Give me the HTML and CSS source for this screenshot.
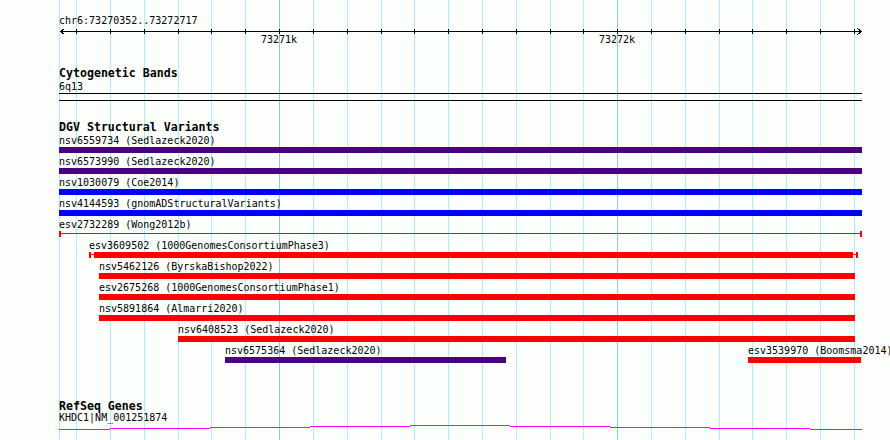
FILE: index.html
```html
<!DOCTYPE html>
<html lang="en">
<head>
    <meta charset="UTF-8">
    <title>Genome Browser - chr6:73270352..73272717</title>
    <link rel="stylesheet" href="styles.css">
</head>
<body>
    <div id="browser">
        <!-- vertical grid, one line per 100bp, darker at each kb -->
        <svg id="grid" width="890" height="440">
            <g class="minor">
                <line x1="59.5" y1="0" x2="59.5" y2="440"/>
                <line x1="76.5" y1="0" x2="76.5" y2="440"/>
                <line x1="110.5" y1="0" x2="110.5" y2="440"/>
                <line x1="144.5" y1="0" x2="144.5" y2="440"/>
                <line x1="178.5" y1="0" x2="178.5" y2="440"/>
                <line x1="211.5" y1="0" x2="211.5" y2="440"/>
                <line x1="245.5" y1="0" x2="245.5" y2="440"/>
                <line x1="313.5" y1="0" x2="313.5" y2="440"/>
                <line x1="347.5" y1="0" x2="347.5" y2="440"/>
                <line x1="381.5" y1="0" x2="381.5" y2="440"/>
                <line x1="414.5" y1="0" x2="414.5" y2="440"/>
                <line x1="448.5" y1="0" x2="448.5" y2="440"/>
                <line x1="482.5" y1="0" x2="482.5" y2="440"/>
                <line x1="516.5" y1="0" x2="516.5" y2="440"/>
                <line x1="550.5" y1="0" x2="550.5" y2="440"/>
                <line x1="583.5" y1="0" x2="583.5" y2="440"/>
                <line x1="651.5" y1="0" x2="651.5" y2="440"/>
                <line x1="685.5" y1="0" x2="685.5" y2="440"/>
                <line x1="719.5" y1="0" x2="719.5" y2="440"/>
                <line x1="752.5" y1="0" x2="752.5" y2="440"/>
                <line x1="786.5" y1="0" x2="786.5" y2="440"/>
                <line x1="820.5" y1="0" x2="820.5" y2="440"/>
                <line x1="854.5" y1="0" x2="854.5" y2="440"/>
            </g>
            <g class="major">
                <line x1="279.5" y1="0" x2="279.5" y2="440"/>
                <line x1="617.5" y1="0" x2="617.5" y2="440"/>
            </g>
        </svg>

        <div id="view">
            <div class="ruler">
                <div class="ruler-label">chr6:73270352..73272717</div>
                <svg class="axis" width="803" height="6">
                    <path d="M1 4.5 H803"/>
                    <path d="M5.5 1.5 L1.5 4.5 L5.5 7.5"/>
                    <path d="M798.5 1.5 L802.5 4.5 L798.5 7.5"/>
                    <path d="M17.5 2 V7 M51.5 2 V7 M85.5 2 V7 M119.5 2 V7 M152.5 2 V7 M186.5 2 V7 M220.5 2 V7 M254.5 2 V7 M288.5 2 V7 M322.5 2 V7 M355.5 2 V7 M389.5 2 V7 M423.5 2 V7 M457.5 2 V7 M491.5 2 V7 M524.5 2 V7 M558.5 2 V7 M592.5 2 V7 M626.5 2 V7 M660.5 2 V7 M693.5 2 V7 M727.5 2 V7 M761.5 2 V7 M795.5 2 V7"/>
                </svg>
                <div class="tick-labels">
                    <span style="left: 202px">73271k</span>
                    <span style="left: 540px">73272k</span>
                </div>
            </div>

            <div class="track cyto-track">
                <div class="track-title">Cytogenetic Bands</div>
                <div class="band-label">6q13</div>
                <div class="band"></div>
            </div>

            <div class="track dgv-track">
                <div class="track-title">DGV Structural Variants</div>

                <div class="row">
                    <div class="feature" style="left: 0; width: 803px">
                        <div class="label">nsv6559734 (Sedlazeck2020)</div>
                        <div class="bar indigo"></div>
                    </div>
                </div>
                <div class="row">
                    <div class="feature" style="left: 0; width: 803px">
                        <div class="label">nsv6573990 (Sedlazeck2020)</div>
                        <div class="bar indigo"></div>
                    </div>
                </div>
                <div class="row">
                    <div class="feature" style="left: 0; width: 803px">
                        <div class="label">nsv1030079 (Coe2014)</div>
                        <div class="bar blue"></div>
                    </div>
                </div>
                <div class="row">
                    <div class="feature" style="left: 0; width: 803px">
                        <div class="label">nsv4144593 (gnomADStructuralVariants)</div>
                        <div class="bar blue"></div>
                    </div>
                </div>
                <div class="row">
                    <div class="feature" style="left: 0; width: 803px">
                        <div class="label">esv2732289 (Wong2012b)</div>
                        <div class="ci">
                            <span class="cap"></span>
                            <span class="stem grow"></span>
                            <span class="cap"></span>
                        </div>
                    </div>
                </div>
                <div class="row">
                    <div class="feature" style="left: 30px; width: 769px">
                        <div class="label">esv3609502 (1000GenomesConsortiumPhase3)</div>
                        <div class="ci">
                            <span class="cap"></span>
                            <span class="stem" style="width: 3px"></span>
                            <span class="core"></span>
                            <span class="stem" style="width: 3px"></span>
                            <span class="cap"></span>
                        </div>
                    </div>
                </div>
                <div class="row">
                    <div class="feature" style="left: 40px; width: 756px">
                        <div class="label">nsv5462126 (ByrskaBishop2022)</div>
                        <div class="bar red"></div>
                    </div>
                </div>
                <div class="row">
                    <div class="feature" style="left: 40px; width: 756px">
                        <div class="label">esv2675268 (1000GenomesConsortiumPhase1)</div>
                        <div class="bar red"></div>
                    </div>
                </div>
                <div class="row">
                    <div class="feature" style="left: 40px; width: 756px">
                        <div class="label">nsv5891864 (Almarri2020)</div>
                        <div class="bar red"></div>
                    </div>
                </div>
                <div class="row">
                    <div class="feature" style="left: 119px; width: 677px">
                        <div class="label">nsv6408523 (Sedlazeck2020)</div>
                        <div class="bar red"></div>
                    </div>
                </div>
                <div class="row">
                    <div class="feature" style="left: 166px; width: 281px">
                        <div class="label">nsv6575364 (Sedlazeck2020)</div>
                        <div class="bar indigo"></div>
                    </div>
                    <div class="feature" style="left: 689px; width: 113px">
                        <div class="label">esv3539970 (Boomsma2014)</div>
                        <div class="bar red"></div>
                    </div>
                </div>
            </div>

            <div class="track refseq-track">
                <div class="track-title">RefSeq Genes</div>
                <div class="gene-label">KHDC1|NM_001251874</div>
                <svg class="gene" width="803" height="8">
                    <path d="M0 6.5 H51 M51 5.5 H151 M151 4.5 H251 M251 3.5 H351 M351 2.5 H451 M451 3.5 H551 M551 4.5 H651 M651 5.5 H751 M751 6.5 H803"/>
                </svg>
            </div>
        </div>
    </div>
</body>
</html>
```

FILE: styles.css
```css
body, html {
    margin: 0;
    height: 100%;
    overflow: hidden;
    background-color: #fcfefc;
    font-family: "DejaVu Sans Mono", "Liberation Mono", monospace;
    font-size: 10px;
    color: #000;
}
#browser {
    position: relative;
    width: 890px;
    height: 440px;
    overflow: hidden;
}
#grid {
    position: absolute;
    top: 0;
    left: 0;
    shape-rendering: crispEdges;
}
#grid .minor line {
    stroke: #afeeee;
    stroke-width: 1;
}
#grid .major line {
    stroke: #8cc8e6;
    stroke-width: 1;
}
#view {
    position: relative; /* sits above the grid */
    margin-left: 59px;
    width: 803px;
}

/* ruler */
.ruler {
    padding-top: 15px;
}
.ruler-label {
    line-height: 12px;
    white-space: nowrap;
}
.axis {
    display: block;
    overflow: visible;
    shape-rendering: crispEdges;
}
.axis path {
    fill: none;
    stroke: #000;
    stroke-width: 1;
}
.tick-labels {
    position: relative;
    height: 13px;
    line-height: 13px;
}
.tick-labels span {
    position: absolute;
    top: 0;
}

/* tracks */
.track-title {
    font-size: 11.6px;
    font-weight: bold;
    line-height: 13px;
    white-space: nowrap;
}
.cyto-track {
    margin-top: 21px;
}
.band-label {
    line-height: 13px;
}
.band {
    height: 6px;
    border-top: 1px solid #000;
    border-bottom: 1px solid #000;
}
.dgv-track {
    margin-top: 20px;
}
.row {
    position: relative;
    height: 21px;
}
.feature {
    position: absolute;
    top: 0;
}
.label {
    height: 13px;
    line-height: 13px;
    white-space: nowrap;
}
.bar {
    height: 6px;
}
.indigo {
    background-color: #4b0082;
}
.blue {
    background-color: #0000ff;
}
.red {
    background-color: #ff0000;
}

/* variant with confidence interval whiskers */
.ci {
    display: flex;
    align-items: flex-start;
    height: 6px;
}
.ci .cap {
    width: 2px;
    height: 6px;
    background-color: #ff0000;
}
.ci .stem {
    height: 1px;
    margin-top: 2px;
    background-color: #ff0000;
}
.ci .stem.grow {
    flex: 1;
}
.ci .core {
    flex: 1;
    height: 6px;
    background-color: #ff0000;
}

.refseq-track {
    margin-top: 35px;
}
.refseq-track .track-title {
    line-height: 12px;
}
.gene-label {
    line-height: 11px;
    white-space: nowrap;
}
.gene {
    display: block;
    shape-rendering: crispEdges;
}
.gene path {
    fill: none;
    stroke: #ff00ff;
    stroke-width: 1;
}
```
